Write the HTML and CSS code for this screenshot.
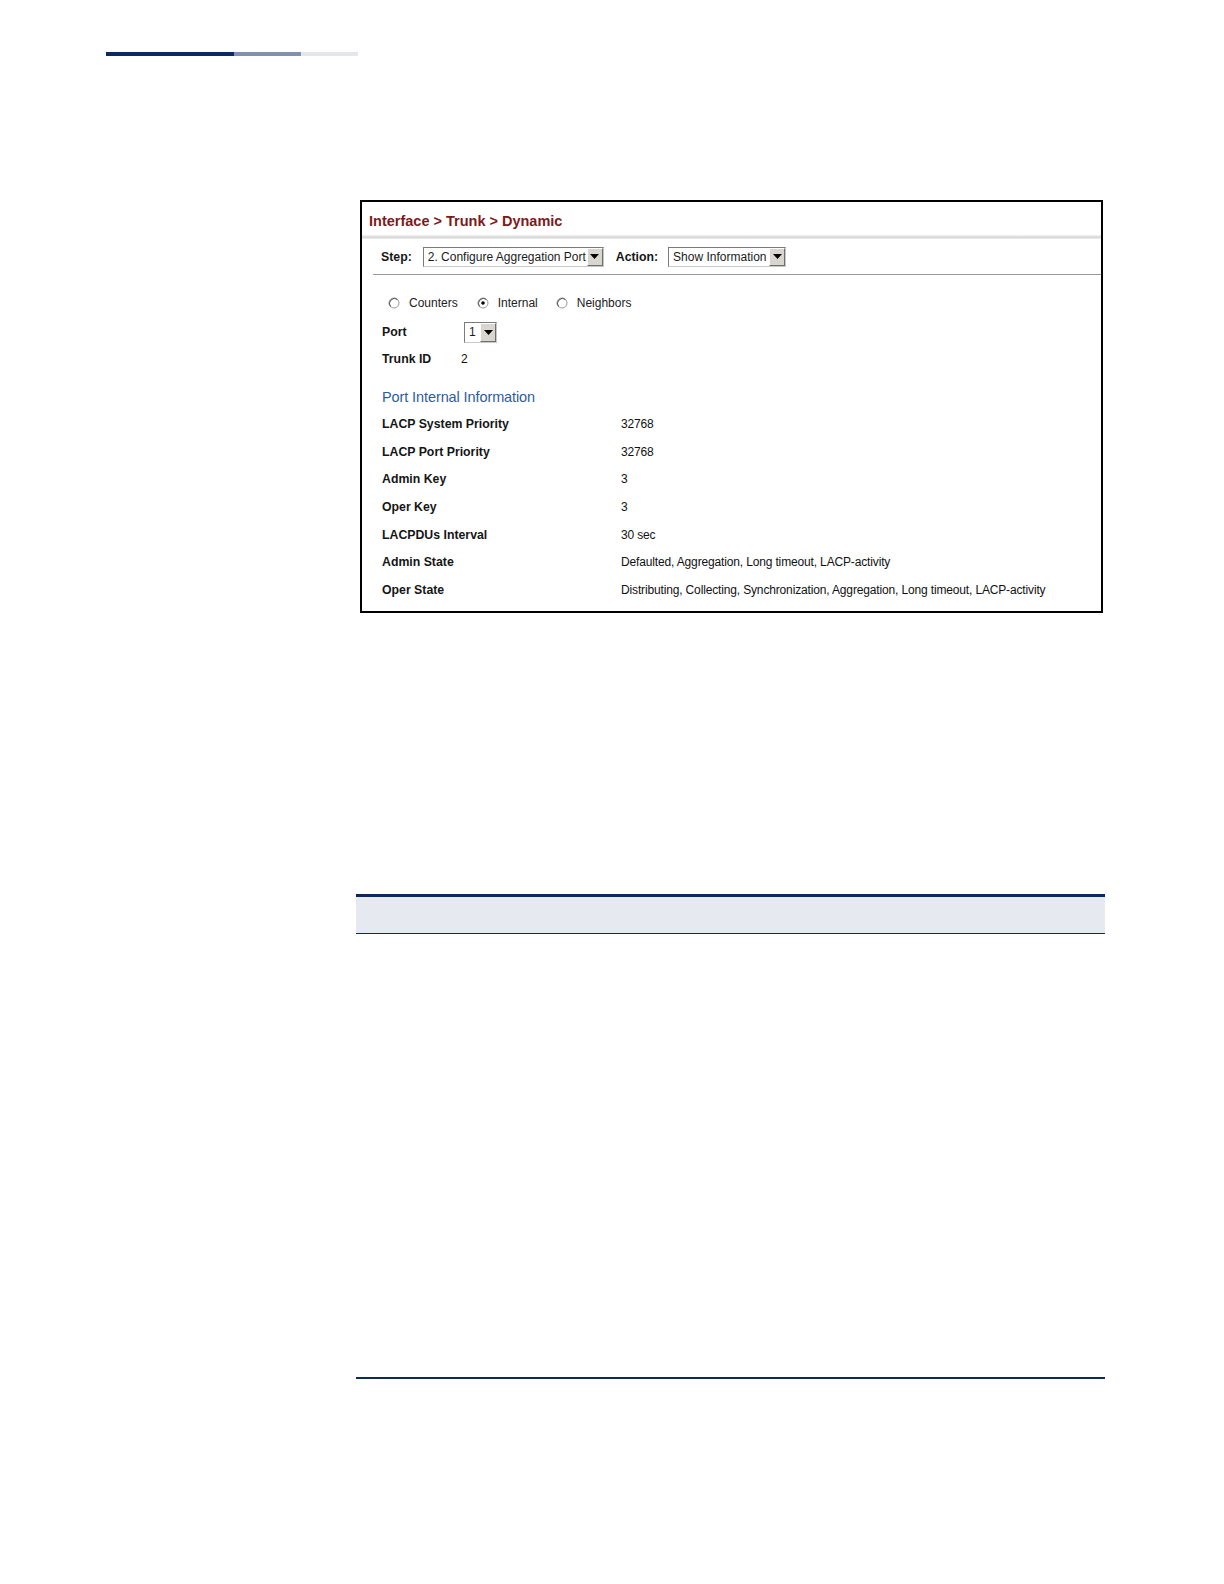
FILE: index.html
```html
<!DOCTYPE html>
<html>
<head>
<meta charset="utf-8">
<link rel="stylesheet" href="styles.css">
</head>
<body>
<div class="page">
  <div class="topbar"><span class="seg seg1"></span><span class="seg seg2"></span><span class="seg seg3"></span></div>

  <div class="shot">
    <div class="title">Interface &gt; Trunk &gt; Dynamic</div>
    <div class="title-rule"></div>
    <div class="steprow">
      <span class="lbl">Step:</span>
      <div class="select sel-step"><span class="sel-text">2. Configure Aggregation Port</span><span class="sel-btn"><svg width="9" height="5" viewBox="0 0 9 5"><path d="M0 0H9L4.5 5Z" fill="#000"/></svg></span></div>
      <span class="lbl lbl-action">Action:</span>
      <div class="select sel-action"><span class="sel-text">Show Information</span><span class="sel-btn"><svg width="9" height="5" viewBox="0 0 9 5"><path d="M0 0H9L4.5 5Z" fill="#000"/></svg></span></div>
    </div>
    <div class="step-rule"></div>

    <div class="content">
      <div class="radios">
        <span class="radio"><svg width="12" height="12" viewBox="0 0 12 12"><circle cx="6" cy="6" r="5" fill="#fff" stroke="#9a9a9a"/><path d="M2.5 9.5A5 5 0 0 1 9.5 2.5" fill="none" stroke="#555" stroke-width="1"/></svg>Counters</span>
        <span class="radio r2"><svg width="12" height="12" viewBox="0 0 12 12"><circle cx="6" cy="6" r="5" fill="#fff" stroke="#9a9a9a"/><path d="M2.5 9.5A5 5 0 0 1 9.5 2.5" fill="none" stroke="#555" stroke-width="1"/><circle cx="6" cy="6" r="1.8" fill="#000"/></svg>Internal</span>
        <span class="radio r3"><svg width="12" height="12" viewBox="0 0 12 12"><circle cx="6" cy="6" r="5" fill="#fff" stroke="#9a9a9a"/><path d="M2.5 9.5A5 5 0 0 1 9.5 2.5" fill="none" stroke="#555" stroke-width="1"/></svg>Neighbors</span>
      </div>
      <div class="portrow">
        <span class="lbl port-lbl">Port</span>
        <div class="select sel-port"><span class="sel-text">1</span><span class="sel-btn"><svg width="9" height="5" viewBox="0 0 9 5"><path d="M0 0H9L4.5 5Z" fill="#000"/></svg></span></div>
      </div>
      <div class="trunkrow">
        <span class="lbl trunk-lbl">Trunk ID</span>
        <span class="val">2</span>
      </div>
      <div class="section">Port Internal Information</div>
      <div class="datarow"><span class="lbl dlbl">LACP System Priority</span><span class="val">32768</span></div>
      <div class="datarow"><span class="lbl dlbl">LACP Port Priority</span><span class="val">32768</span></div>
      <div class="datarow"><span class="lbl dlbl">Admin Key</span><span class="val">3</span></div>
      <div class="datarow"><span class="lbl dlbl">Oper Key</span><span class="val">3</span></div>
      <div class="datarow"><span class="lbl dlbl">LACPDUs Interval</span><span class="val">30 sec</span></div>
      <div class="datarow"><span class="lbl dlbl">Admin State</span><span class="val">Defaulted, Aggregation, Long timeout, LACP-activity</span></div>
      <div class="datarow"><span class="lbl dlbl">Oper State</span><span class="val">Distributing, Collecting, Synchronization, Aggregation, Long timeout, LACP-activity</span></div>
    </div>
  </div>

  <div class="tablehead"></div>
  <div class="tablefoot"></div>
</div>
</body>
</html>
```

FILE: styles.css
```css
html, body {
  margin: 0;
  padding: 0;
  background: #ffffff;
}
.page {
  padding-top: 52px;
  font-family: "Liberation Sans", Arial, sans-serif;
  color: #111;
}
.topbar {
  display: flex;
  margin-left: 106px;
  height: 4px;
}
.seg { display: block; height: 4px; }
.seg1 { width: 128px; background: #0b2a62; }
.seg2 { width: 67px; background: #8391b0; }
.seg3 { width: 57px; background: #e6e7ea; }

.shot {
  margin-top: 144px;
  margin-left: 360px;
  width: 743px;
  height: 413px;
  box-sizing: border-box;
  border: 2px solid #000;
  background: #fff;
}
.title {
  height: 33px;
  padding-left: 7px;
  box-sizing: border-box;
  padding-top: 10px;
  font-size: 14.5px;
  line-height: 18px;
  font-weight: bold;
  color: #7c1a1c;
}
.title-rule {
  height: 4px;
  background: linear-gradient(to bottom, #f3f3f3, #d6d6d6 60%, #f2f2f2);
}
.steprow {
  height: 35px;
  display: flex;
  align-items: center;
  padding-left: 19px;
  font-size: 12px;
}
.lbl {
  font-weight: bold;
  font-size: 12.3px;
  color: #151515;
}
.lbl-action { margin-left: 12px; }
.select {
  display: flex;
  align-items: stretch;
  height: 20px;
  box-sizing: border-box;
  border: 1px solid #7b7b7b;
  border-right-color: #c8c8c8;
  border-bottom-color: #c8c8c8;
  background: #fff;
  font-size: 12px;
}
.sel-text {
  flex: 1;
  padding-left: 4px;
  line-height: 18px;
  white-space: nowrap;
  overflow: hidden;
  color: #1a1a1a;
}
.sel-btn {
  width: 16px;
  background: #d9d6cf;
  border: 1px solid;
  border-color: #fff #6e6e6e #6e6e6e #fff;
  box-sizing: border-box;
  display: flex;
  align-items: center;
  justify-content: center;
}
.sel-step { width: 181px; margin-left: 11px; }
.sel-action { width: 118px; margin-left: 10px; }
.sel-port { width: 33px; margin-left: 57px; height: 21px; }

.step-rule {
  margin-left: 11px;
  height: 1px;
  background: #9a9a9a;
}
.content {
  padding-left: 20px;
  padding-top: 18px;
  font-size: 12px;
}
.radios {
  height: 20px;
  display: flex;
  align-items: center;
  padding-left: 6px;
}
.radio {
  display: flex;
  align-items: center;
  gap: 9px;
  font-size: 12px;
  color: #222;
}
.radio.r2 { margin-left: 19px; }
.radio.r3 { margin-left: 18px; }
.radio svg { display: block; }
.portrow {
  margin-top: 8px;
  height: 22px;
  display: flex;
  align-items: center;
}
.port-lbl { width: 82px; }
.sel-port { margin-left: 0; }
.trunkrow {
  margin-top: 6px;
  height: 20px;
  display: flex;
  align-items: center;
}
.trunk-lbl { width: 79px; }
.section {
  margin-top: 18px;
  height: 20px;
  line-height: 20px;
  font-size: 14.5px;
  color: #2f5c9f;
  letter-spacing: -0.1px;
}
.datarow {
  height: 27.7px;
  display: flex;
  align-items: center;
}
.section + .datarow { margin-top: 3px; }
.dlbl { width: 239px; }
.val {
  font-size: 12px;
  color: #111;
  letter-spacing: -0.15px;
}

.tablehead {
  margin-top: 281px;
  margin-left: 356px;
  width: 749px;
  height: 40px;
  box-sizing: border-box;
  border-top: 3px solid #0b2a5c;
  border-bottom: 1px solid #0f2a4a;
  background: #e6e9f0;
}
.tablefoot {
  margin-top: 443px;
  margin-left: 356px;
  width: 749px;
  height: 2px;
  background: #0b2a5c;
}
```
